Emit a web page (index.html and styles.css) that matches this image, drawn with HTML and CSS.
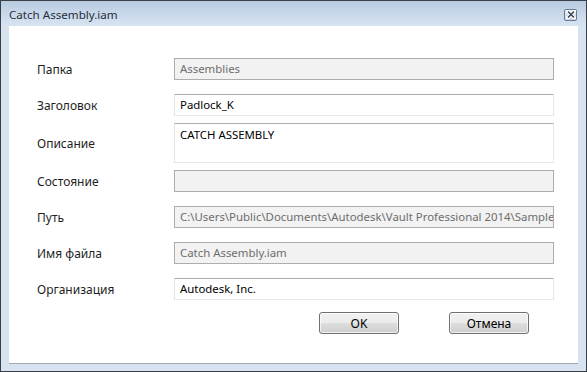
FILE: index.html
```html
<!DOCTYPE html>
<html lang="ru">
<head>
<meta charset="utf-8">
<title>Catch Assembly.iam</title>
<link rel="stylesheet" href="styles.css">
</head>
<body>
<div class="window">
  <div class="titlebar">
    <span class="title">Catch Assembly.iam</span>
    <span class="close">
      <svg width="10" height="9" viewBox="0 0 10 9">
        <path d="M1.5 1 L8.5 8 M8.5 1 L1.5 8" stroke="#ffffff" stroke-width="3.4" stroke-linecap="square"/>
        <path d="M2 1.5 L8 7.5 M8 1.5 L2 7.5" stroke="#3d4654" stroke-width="1.6"/>
      </svg>
    </span>
  </div>
  <div class="client">
    <div class="form">
      <div class="row r1"><span class="label">Папка</span><div class="box disabled">Assemblies</div></div>
      <div class="row r2"><span class="label">Заголовок</span><div class="box">Padlock_K</div></div>
      <div class="row r3"><span class="label">Описание</span><div class="box tall">CATCH ASSEMBLY</div></div>
      <div class="row r3"><span class="label">Состояние</span><div class="box disabled"></div></div>
      <div class="row r2"><span class="label">Путь</span><div class="box disabled">C:\Users\Public\Documents\Autodesk\Vault Professional 2014\Sample Files\Designs\Padlock</div></div>
      <div class="row r2"><span class="label">Имя файла</span><div class="box disabled">Catch Assembly.iam</div></div>
      <div class="row r2"><span class="label">Организация</span><div class="box">Autodesk, Inc.</div></div>
    </div>
    <div class="buttons">
      <button class="btn">OK</button>
      <button class="btn">Отмена</button>
    </div>
  </div>
</div>
</body>
</html>
```
FILE: styles.css
```css
html, body {
  margin: 0;
  padding: 0;
  background: #d7e3f1;
}
body {
  font-family: "Noto Sans", "Open Sans", sans-serif;
  font-size: 12px;
  color: #1e1e1e;
}
.window {
  width: 587px;
  height: 372px;
  box-sizing: border-box;
  border: 1px solid #3a3f47;
  background: #d7e3f1;
  display: flex;
  flex-direction: column;
  padding: 0 8px 7px 8px;
}
.titlebar {
  height: 25px;
  margin: 0 -8px;
  padding: 0 9px 0 8px;
  display: flex;
  align-items: center;
  justify-content: space-between;
  background: linear-gradient(to bottom, #b9cbe0 0%, #c9d8ea 50%, #d7e3f1 100%);
}
.title {
  font-size: 11.6px;
  color: #27303c;
  padding-top: 2px;
}
.close {
  width: 11px;
  height: 10px;
  border: 1px solid #6b7a93;
  border-radius: 2px;
  background: linear-gradient(to bottom, #e6edf6, #c9d6e6);
  display: flex;
  align-items: center;
  justify-content: center;
  margin-top: 2px;
}
.close svg { display: block; }
.client {
  flex: 1;
  background: #ffffff;
  border-bottom: 1px solid #a3a8ae;
  padding: 32px 24px 0 28px;
}
.form {
  display: flex;
  flex-direction: column;
}
.row {
  display: grid;
  grid-template-columns: 137px 380px;
  align-items: center;
}
.r2 { margin-top: 14px; }
.r3 { margin-top: 7px; }
.label {
  color: #1e1e1e;
  padding-left: 0;
}
.box {
  box-sizing: border-box;
  height: 22px;
  padding: 0 5px;
  line-height: 20px;
  font-size: 11.4px;
  white-space: nowrap;
  overflow: hidden;
  background: #ffffff;
  color: #000000;
  border: 1px solid;
  border-color: #abadb3 #e3e9ef #e3e9ef #e2e3ea;
}
.box.tall {
  height: 40px;
  line-height: 18px;
  padding-top: 2px;
}
.box.disabled {
  background: #f2f2f2;
  color: #6d6d6d;
  border-color: #adadad;
}
.buttons {
  display: flex;
  margin-top: 12px;
  padding-left: 282px;
  gap: 50px;
}
.btn {
  width: 80px;
  height: 22px;
  box-sizing: border-box;
  border: 1px solid #707070;
  border-radius: 3px;
  background: linear-gradient(to bottom, #f2f2f2 0%, #ebebeb 50%, #dddddd 51%, #cfcfcf 100%);
  box-shadow: inset 0 0 0 1px rgba(255,255,255,0.7);
  font-family: "Noto Sans", "Open Sans", sans-serif;
  font-size: 12px;
  color: #000000;
  padding: 0;
}
```
